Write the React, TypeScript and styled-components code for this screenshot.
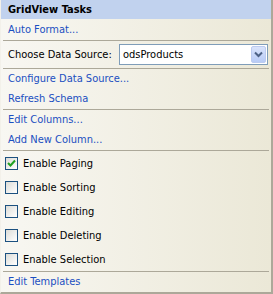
import styled, { createGlobalStyle } from 'styled-components';

const GlobalStyle = createGlobalStyle`
  html, body {
    margin: 0;
    padding: 0;
    background: #ffffff;
  }
`;

const checkOptions = [
  { label: 'Enable Paging', checked: true },
  { label: 'Enable Sorting', checked: false },
  { label: 'Enable Editing', checked: false },
  { label: 'Enable Deleting', checked: false },
  { label: 'Enable Selection', checked: false },
];

export default function App() {
  return (
    <>
      <GlobalStyle />
      <Panel>
        <Header>GridView Tasks</Header>
        <LinkRow $height={21}>Auto Format...</LinkRow>
        <Separator />
        <SourceRow>
          <Label>Choose Data Source:</Label>
          <Combo>
            <ComboText>odsProducts</ComboText>
            <ComboButton>
              <svg width="9" height="7" viewBox="0 0 9 7">
                <path d="M1 1.5 L4.5 5 L8 1.5" fill="none" stroke="#4d6185" strokeWidth="2" />
              </svg>
            </ComboButton>
          </Combo>
        </SourceRow>
        <Separator />
        <LinkRow $height={20}>Configure Data Source...</LinkRow>
        <LinkRow $height={20}>Refresh Schema</LinkRow>
        <Separator />
        <LinkRow $height={20}>Edit Columns...</LinkRow>
        <LinkRow $height={20}>Add New Column...</LinkRow>
        <Separator />
        {checkOptions.map((opt) => (
          <CheckRow key={opt.label}>
            <CheckBox>
              {opt.checked && (
                <svg width="11" height="11" viewBox="0 0 11 11">
                  <path d="M2 5 L4.5 7.5 L9 2.5" fill="none" stroke="#21a121" strokeWidth="2" />
                </svg>
              )}
            </CheckBox>
            <CheckLabel>{opt.label}</CheckLabel>
          </CheckRow>
        ))}
        <Separator />
        <LinkRow $height={20}>Edit Templates</LinkRow>
      </Panel>
    </>
  );
}

const Panel = styled.div`
  width: 273px;
  height: 294px;
  box-sizing: border-box;
  border-left: 1px solid #f3f1ea;
  border-right: 2px solid #aca899;
  border-bottom: 2px solid #aca899;
  background: linear-gradient(to right, #f8f7f2, #ebe8d7);
  font-family: Tahoma, "DejaVu Sans Condensed", "DejaVu Sans", sans-serif;
  font-size: 11px;
  color: #000;
  display: flex;
  flex-direction: column;
`;

const Header = styled.div`
  height: 19px;
  line-height: 19px;
  background: #c1d2ee;
  font-weight: bold;
  padding-left: 7px;
`;

const LinkRow = styled.div<{ $height: number }>`
  height: ${(p) => p.$height}px;
  line-height: ${(p) => p.$height}px;
  padding-left: 7px;
  color: #1b4fc1;
  cursor: pointer;
`;

const Separator = styled.div`
  height: 1px;
  margin: 0 2px;
  background: #aca899;
`;

const SourceRow = styled.div`
  height: 27px;
  display: flex;
  align-items: center;
  padding-left: 7px;
  padding-right: 3px;
`;

const Label = styled.span`
  width: 111px;
`;

const Combo = styled.div`
  flex: 1;
  height: 21px;
  box-sizing: border-box;
  border: 1px solid #7f9db9;
  background: #fff;
  display: flex;
  align-items: center;
  padding: 1px;
`;

const ComboText = styled.span`
  flex: 1;
  padding-left: 2px;
`;

const ComboButton = styled.div`
  width: 15px;
  height: 17px;
  box-sizing: border-box;
  border: 1px solid #bccbf0;
  border-radius: 2px;
  background: linear-gradient(to bottom, #d9e3fb, #b8cbf6);
  display: flex;
  align-items: center;
  justify-content: center;
`;

const CheckRow = styled.div`
  height: 24px;
  display: flex;
  align-items: center;
  padding-left: 4px;
`;

const CheckBox = styled.div`
  width: 13px;
  height: 13px;
  box-sizing: border-box;
  border: 1px solid #1c5180;
  background: linear-gradient(135deg, #dcdcd7, #ffffff);
  display: flex;
  align-items: center;
  justify-content: center;
`;

const CheckLabel = styled.span`
  margin-left: 5px;
`;
